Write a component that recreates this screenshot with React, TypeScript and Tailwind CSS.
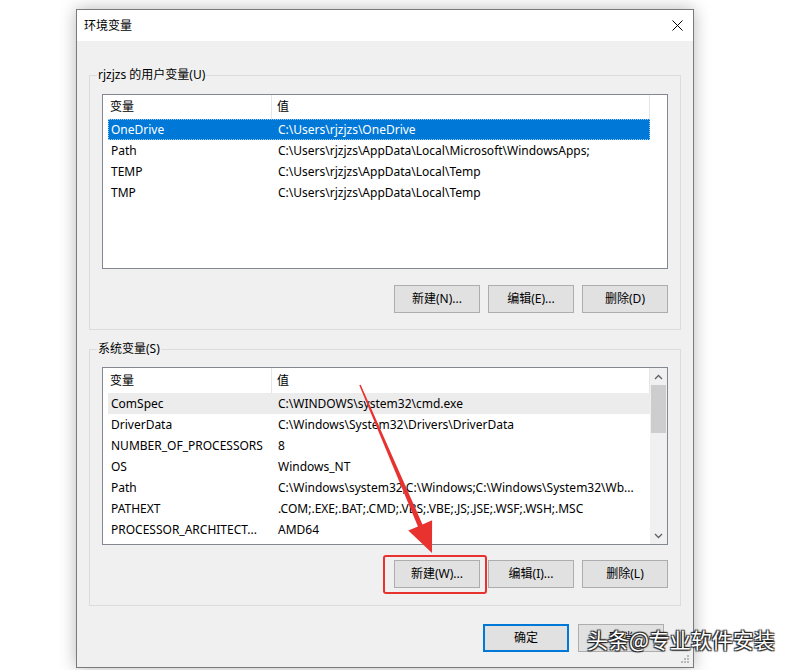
import React from "react";

const userRows: [string, string][] = [
  ["OneDrive", "C:\\Users\\rjzjzs\\OneDrive"],
  ["Path", "C:\\Users\\rjzjzs\\AppData\\Local\\Microsoft\\WindowsApps;"],
  ["TEMP", "C:\\Users\\rjzjzs\\AppData\\Local\\Temp"],
  ["TMP", "C:\\Users\\rjzjzs\\AppData\\Local\\Temp"],
];

const sysRows: [string, string][] = [
  ["ComSpec", "C:\\WINDOWS\\system32\\cmd.exe"],
  ["DriverData", "C:\\Windows\\System32\\Drivers\\DriverData"],
  ["NUMBER_OF_PROCESSORS", "8"],
  ["OS", "Windows_NT"],
  ["Path", "C:\\Windows\\system32;C:\\Windows;C:\\Windows\\System32\\Wb..."],
  ["PATHEXT", ".COM;.EXE;.BAT;.CMD;.VBS;.VBE;.JS;.JSE;.WSF;.WSH;.MSC"],
  ["PROCESSOR_ARCHITECT...", "AMD64"],
];

function Btn({ children, primary }: { children: React.ReactNode; primary?: boolean }) {
  return (
    <button
      className={
        primary
          ? "w-[86px] h-[28px] bg-[#e1e1e1] border-2 border-[#0078d7] text-[12px] text-black flex items-center justify-center"
          : "w-[86px] h-[28px] bg-[#e1e1e1] border border-[#adadad] text-[12px] text-black flex items-center justify-center"
      }
    >
      {children}
    </button>
  );
}

function Header({ tall }: { tall?: boolean }) {
  return (
    <div className={tall ? "h-[25px] flex items-center bg-white" : "h-[24px] flex items-center bg-white"}>
      <div className="w-[169px] h-full flex items-center pl-[7px] border-r border-[#e5e5e5]">变量</div>
      <div className="w-[378px] h-full flex items-center pl-[5px] border-r border-[#e5e5e5]">值</div>
    </div>
  );
}

function Row({ name, value, mode }: { name: string; value: string; mode?: "sel" | "hover" }) {
  const cls =
    mode === "sel"
      ? "ml-[5px] w-[542px] h-[21px] flex items-center bg-[#0078d7] text-white outline outline-1 outline-dotted outline-[#99c9ef] -outline-offset-1"
      : mode === "hover"
      ? "ml-[5px] w-[542px] h-[21px] flex items-center bg-[#ececec] text-black"
      : "ml-[5px] w-[542px] h-[21px] flex items-center text-black";
  return (
    <div className={cls}>
      <div className="w-[164px] pl-[3px] whitespace-nowrap overflow-hidden">{name}</div>
      <div className="flex-1 pl-[6px] whitespace-nowrap overflow-hidden">{value}</div>
    </div>
  );
}

function Scrollbar() {
  return (
    <div className="w-[17px] h-full bg-[#f0f0f0] flex flex-col">
      <div className="h-[17px] flex items-center justify-center">
        <svg width="9" height="6" viewBox="0 0 9 6">
          <path d="M1 5 L4.5 1.5 L8 5" fill="none" stroke="#606060" strokeWidth="1.3" />
        </svg>
      </div>
      <div className="mx-[1px] h-[48px] bg-[#cdcdcd]" />
      <div className="flex-1" />
      <div className="h-[17px] flex items-center justify-center">
        <svg width="9" height="6" viewBox="0 0 9 6">
          <path d="M1 1 L4.5 4.5 L8 1" fill="none" stroke="#606060" strokeWidth="1.3" />
        </svg>
      </div>
    </div>
  );
}

export default function App() {
  return (
    <div className="w-[792px] h-[670px] bg-white relative overflow-hidden pl-[76px] pt-[9px] font-['Noto_Sans','Noto_Sans_CJK_SC',sans-serif] text-[12px] text-black">
      {/* dialog */}
      <div className="w-[618px] h-[659px] border border-[#7a7a7a] bg-[#f0f0f0] flex flex-col shadow-[0_0_16px_rgba(0,0,0,0.28)] relative">
        <div className="h-[31px] bg-white flex items-center justify-between pl-[7px] pr-[10px]">
          <span className="text-[12px]">环境变量</span>
          <svg width="11" height="11" viewBox="0 0 11 11">
            <path d="M0.5 0.5 L10.5 10.5 M10.5 0.5 L0.5 10.5" stroke="#000" strokeWidth="1" />
          </svg>
        </div>
        <div className="flex-1 flex flex-col pt-[26px]">
          {/* user group */}
          <fieldset className="mx-[12px] border border-[#dcdcdc] px-[12px] pb-[16px]">
            <legend className="ml-[-5px] px-[1px] leading-[16px]">rjzjzs 的用户变量(U)</legend>
            <div className="mt-[11px] h-[175px] border border-[#828790] bg-white flex flex-col">
              <Header />
              {userRows.map((r, i) => (
                <Row key={i} name={r[0]} value={r[1]} mode={i === 0 ? "sel" : undefined} />
              ))}
            </div>
            <div className="mt-[16px] flex justify-end gap-[8px]">
              <Btn>新建(N)...</Btn>
              <Btn>编辑(E)...</Btn>
              <Btn>删除(D)</Btn>
            </div>
          </fieldset>
          {/* system group */}
          <fieldset className="mx-[12px] mt-[11px] border border-[#dcdcdc] px-[12px] pb-[17px]">
            <legend className="ml-[-5px] px-[1px] leading-[16px]">系统变量(S)</legend>
            <div className="mt-[10px] h-[178px] border border-[#828790] bg-white flex">
              <div className="flex-1 flex flex-col">
                <Header tall />
                {sysRows.map((r, i) => (
                  <Row key={i} name={r[0]} value={r[1]} mode={i === 0 ? "hover" : undefined} />
                ))}
              </div>
              <Scrollbar />
            </div>
            <div className="mt-[15px] flex justify-end gap-[8px]">
              <Btn>新建(W)...</Btn>
              <Btn>编辑(I)...</Btn>
              <Btn>删除(L)</Btn>
            </div>
          </fieldset>
          <div className="mt-[18px] flex justify-end gap-[9px] pr-[29px]">
            <Btn primary>确定</Btn>
            <Btn>取消</Btn>
          </div>
        </div>
        {/* resize grip */}
        <svg className="absolute right-[3px] bottom-[3px]" width="10" height="10" viewBox="0 0 10 10">
          {[
            [8, 2], [8, 5], [8, 8], [5, 5], [5, 8], [2, 8],
          ].map(([x, y], i) => (
            <rect key={i} x={x - 1} y={y - 1} width="2" height="2" fill="#b8b8b8" />
          ))}
        </svg>
      </div>

      {/* red highlight rectangle */}
      <div className="absolute left-[383px] top-[555px] w-[104px] h-[39px] border-2 border-[#e8322f] rounded-[3px]" />

      {/* red arrow */}
      <svg className="absolute left-0 top-0" width="792" height="670" viewBox="0 0 792 670">
        <polygon
          points="359.3,385.3 360.7,384.7 422.5,524.4 432.1,520.3 432,553 408.3,530.5 417.9,526.4"
          fill="#e8322f"
        />
      </svg>

      {/* watermark */}
      <div className="absolute left-[587px] top-[626px] text-[21px] leading-[26px] text-white whitespace-nowrap font-['Noto_Sans_CJK_SC',sans-serif] [text-shadow:1px_1px_1px_#222,-1px_-1px_1px_#222,1px_-1px_1px_#222,-1px_1px_1px_#222]">
        头条@专业软件安装
      </div>
    </div>
  );
}
